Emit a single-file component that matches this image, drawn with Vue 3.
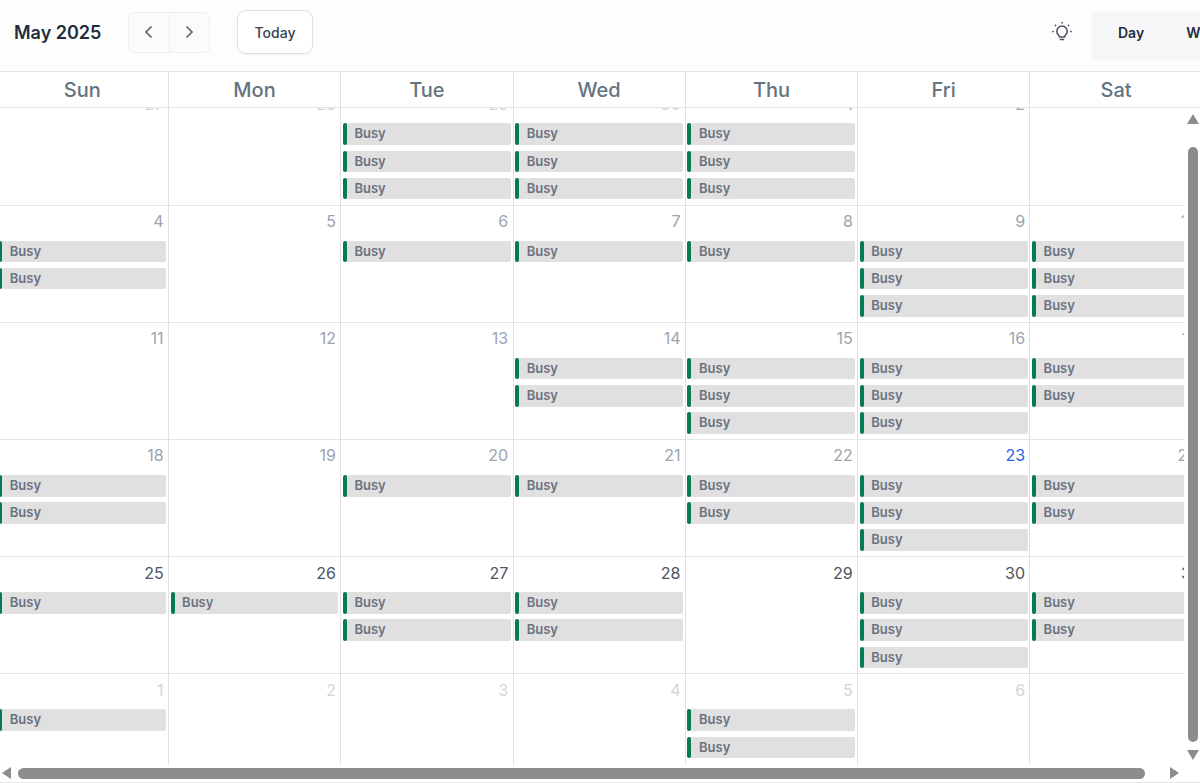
<script setup>
const days = ['Sun', 'Mon', 'Tue', 'Wed', 'Thu', 'Fri', 'Sat']

// number, tone, busy count
const cells = [
  [27, 'other', 0], [28, 'other', 0], [29, 'other', 3], [30, 'other', 3], [1, 'muted', 3], [2, 'muted', 0], [3, 'muted', 0],
  [4, 'muted', 2], [5, 'muted', 0], [6, 'muted', 1], [7, 'muted', 1], [8, 'muted', 1], [9, 'muted', 3], [10, 'muted', 3],
  [11, 'muted', 0], [12, 'muted', 0], [13, 'muted', 0], [14, 'muted', 2], [15, 'muted', 3], [16, 'muted', 3], [17, 'muted', 2],
  [18, 'muted', 2], [19, 'muted', 0], [20, 'muted', 1], [21, 'muted', 1], [22, 'muted', 2], [23, 'current', 3], [24, 'muted', 2],
  [25, 'dark', 1], [26, 'dark', 1], [27, 'dark', 2], [28, 'dark', 2], [29, 'dark', 0], [30, 'dark', 3], [31, 'dark', 2],
  [1, 'other', 1], [2, 'other', 0], [3, 'other', 0], [4, 'other', 0], [5, 'other', 2], [6, 'other', 0], [7, 'other', 0]
]
</script>

<template>
  <div class="calendar">
    <header class="toolbar">
      <div class="left">
        <h1>May 2025</h1>
        <div class="nav">
          <button>
            <svg width="16" height="16" viewBox="0 0 16 16"><path d="M10.500 2.500 5 8l5.500 5.500" /></svg>
          </button>
          <button>
            <svg width="16" height="16" viewBox="0 0 16 16"><path d="M5.500 2.500 11 8l-5.500 5.500" /></svg>
          </button>
        </div>
        <button class="today-btn">Today</button>
      </div>
      <div class="right">
        <svg class="bulb" width="22" height="22" viewBox="0 0 22 22">
          <path d="M7.600 14.200a5.200 5.200 0 1 1 6.800 0c-.6.600-.9 1.100-.9 1.800H8.500c0-.7-.3-1.200-.9-1.800Z" />
          <path d="M8.800 18.500h4.400M11 1v1.600M3.900 3.900 5 5M18.100 3.900 17 5M1.200 10.500h1.600M19.200 10.500h1.600" />
        </svg>
        <div class="views">
          <span>Day</span>
          <span>Week</span>
        </div>
      </div>
    </header>

    <div class="weekdays">
      <div v-for="d in days" :key="d" class="weekday">{{ d }}</div>
    </div>

    <div class="body">
      <div class="body-row">
        <div class="viewport">
          <div class="month">
            <div v-for="(c, i) in cells" :key="i" class="cell">
              <div class="num" :class="c[1]">{{ c[0] }}</div>
              <div v-for="n in c[2]" :key="n" class="event">Busy</div>
            </div>
          </div>
        </div>
        <div class="vbar">
          <i class="arrow up"></i>
          <div class="vthumb"></div>
          <i class="arrow down"></i>
        </div>
      </div>
      <div class="hbar">
        <i class="arrow left-a"></i>
        <div class="hthumb"></div>
        <i class="arrow right-a"></i>
      </div>
    </div>
  </div>
</template>

<style scoped>
.calendar {
  width: 1200px;
  height: 783px;
  display: flex;
  flex-direction: column;
  overflow: hidden;
  background: #fff;
  font-family: Inter, "Liberation Sans", sans-serif;
}

.toolbar {
  height: 71px;
  flex: none;
  display: flex;
  justify-content: space-between;
  align-items: center;
  background: #fdfdfd;
  border-bottom: 1px solid #e5e5e5;
}

.left {
  display: flex;
  align-items: center;
  padding-left: 14px;
  margin-top: -7px;
}

h1 {
  margin: 0;
  width: 114px;
  font-size: 18px;
  font-weight: 600;
  color: #1f2d3d;
}

.nav {
  display: flex;
  width: 82px;
  height: 41px;
  box-sizing: border-box;
  border: 1px solid #efeff1;
  border-radius: 6px;
  background: #fbfbfb;
}

.nav button {
  flex: 1;
  display: flex;
  align-items: center;
  justify-content: center;
  padding: 0;
  border: none;
  background: none;
}

.nav button + button {
  border-left: 1px solid #efeff1;
}

.nav path {
  fill: none;
  stroke: #5f6670;
  stroke-width: 1.7;
}

.today-btn {
  margin-left: 27px;
  width: 76px;
  height: 44px;
  border: 1px solid #dfdfe2;
  border-radius: 9px;
  background: #fff;
  box-shadow: 0 1px 2px rgba(0, 0, 0, 0.05);
  font-family: inherit;
  font-size: 14px;
  font-weight: 500;
  color: #374151;
}

.right {
  display: flex;
  align-items: center;
  width: 149px;
  flex: none;
}

.bulb {
  flex: none;
  margin-right: 19px;
  margin-top: -8px;
}

.bulb path {
  fill: none;
  stroke: #4f5660;
  stroke-width: 1.6;
}

.views {
  flex: none;
  display: flex;
  gap: 42px;
  height: 48px;
  padding-left: 26px;
  align-items: center;
  background: #f7f7f9;
  font-size: 14px;
  font-weight: 600;
  color: #1f2d3d;
  white-space: nowrap;
}

.views span {
  margin-top: -6px;
}

.weekdays {
  flex: none;
  display: grid;
  grid-template-columns: repeat(7, 172.3px);
  height: 35px;
  margin-left: -3.400px;
  border-bottom: 1px solid #e5e5e5;
}

.weekday {
  display: flex;
  align-items: center;
  justify-content: center;
  font-size: 20px;
  font-weight: 500;
  color: #64747f;
  border-right: 1px solid #e0e0e0;
}

.body {
  flex: 1;
  min-height: 0;
  display: flex;
  flex-direction: column;
}

.body-row {
  flex: 1;
  min-height: 0;
  display: flex;
}

.viewport {
  flex: 1;
  min-width: 0;
  overflow: hidden;
}

.month {
  display: grid;
  grid-template-columns: repeat(7, 172.3px);
  grid-auto-rows: 117.200px;
  margin-top: -19.500px;
  margin-left: -3.400px;
}

.cell {
  box-sizing: border-box;
  padding: 3.300px 1.800px 0 1.700px;
  border-right: 1px solid #e0e0e0;
  border-bottom: 1px solid #e5e5e5;
}

.num {
  height: 26px;
  padding-right: 2.500px;
  margin-bottom: 5.700px;
  text-align: right;
  font-size: 16px;
  line-height: 24px;
}

.num.muted { color: #9ca3af; }
.num.other { color: #d1d5db; }
.num.dark { color: #4b5563; }
.num.current { color: #2563eb; }

.event {
  position: relative;
  box-sizing: border-box;
  height: 21.500px;
  margin-bottom: 5.700px;
  padding-left: 11.500px;
  border-radius: 2px;
  background: #e0e0e0;
  font-size: 13px;
  font-weight: 600;
  line-height: 21.500px;
  color: #6b7280;
}

.event::before {
  content: "";
  position: absolute;
  left: 0;
  top: 0;
  bottom: 0;
  width: 4px;
  border-radius: 2px;
  background: #067a50;
}

.vbar {
  width: 16px;
  flex: none;
  box-sizing: border-box;
  padding-left: 2px;
  display: flex;
  flex-direction: column;
  align-items: center;
  background: #fff;
}

.vthumb {
  width: 10px;
  height: 595px;
  margin: 23px 0 8px;
  border-radius: 5px;
  background: #8c8c8c;
}

.hbar {
  height: 18px;
  flex: none;
  box-sizing: border-box;
  padding-bottom: 1px;
  display: flex;
  align-items: center;
  border-bottom: 1px solid #e5e5e5;
  background: #fff;
}

.hthumb {
  width: 1127px;
  height: 11px;
  margin: 0 25px 0 7px;
  border-radius: 6px;
  background: #8c8c8c;
}

.arrow {
  display: block;
  width: 0;
  height: 0;
  flex: none;
}

.arrow.up {
  margin-top: 6px;
  border-left: 6px solid transparent;
  border-right: 6px solid transparent;
  border-bottom: 10px solid #8c8c8c;
}

.arrow.down {
  border-left: 6px solid transparent;
  border-right: 6px solid transparent;
  border-top: 10px solid #8c8c8c;
}

.arrow.left-a {
  margin-left: 2px;
  border-top: 6px solid transparent;
  border-bottom: 6px solid transparent;
  border-right: 9px solid #8c8c8c;
}

.arrow.right-a {
  border-top: 6px solid transparent;
  border-bottom: 6px solid transparent;
  border-left: 9px solid #8c8c8c;
}
</style>
